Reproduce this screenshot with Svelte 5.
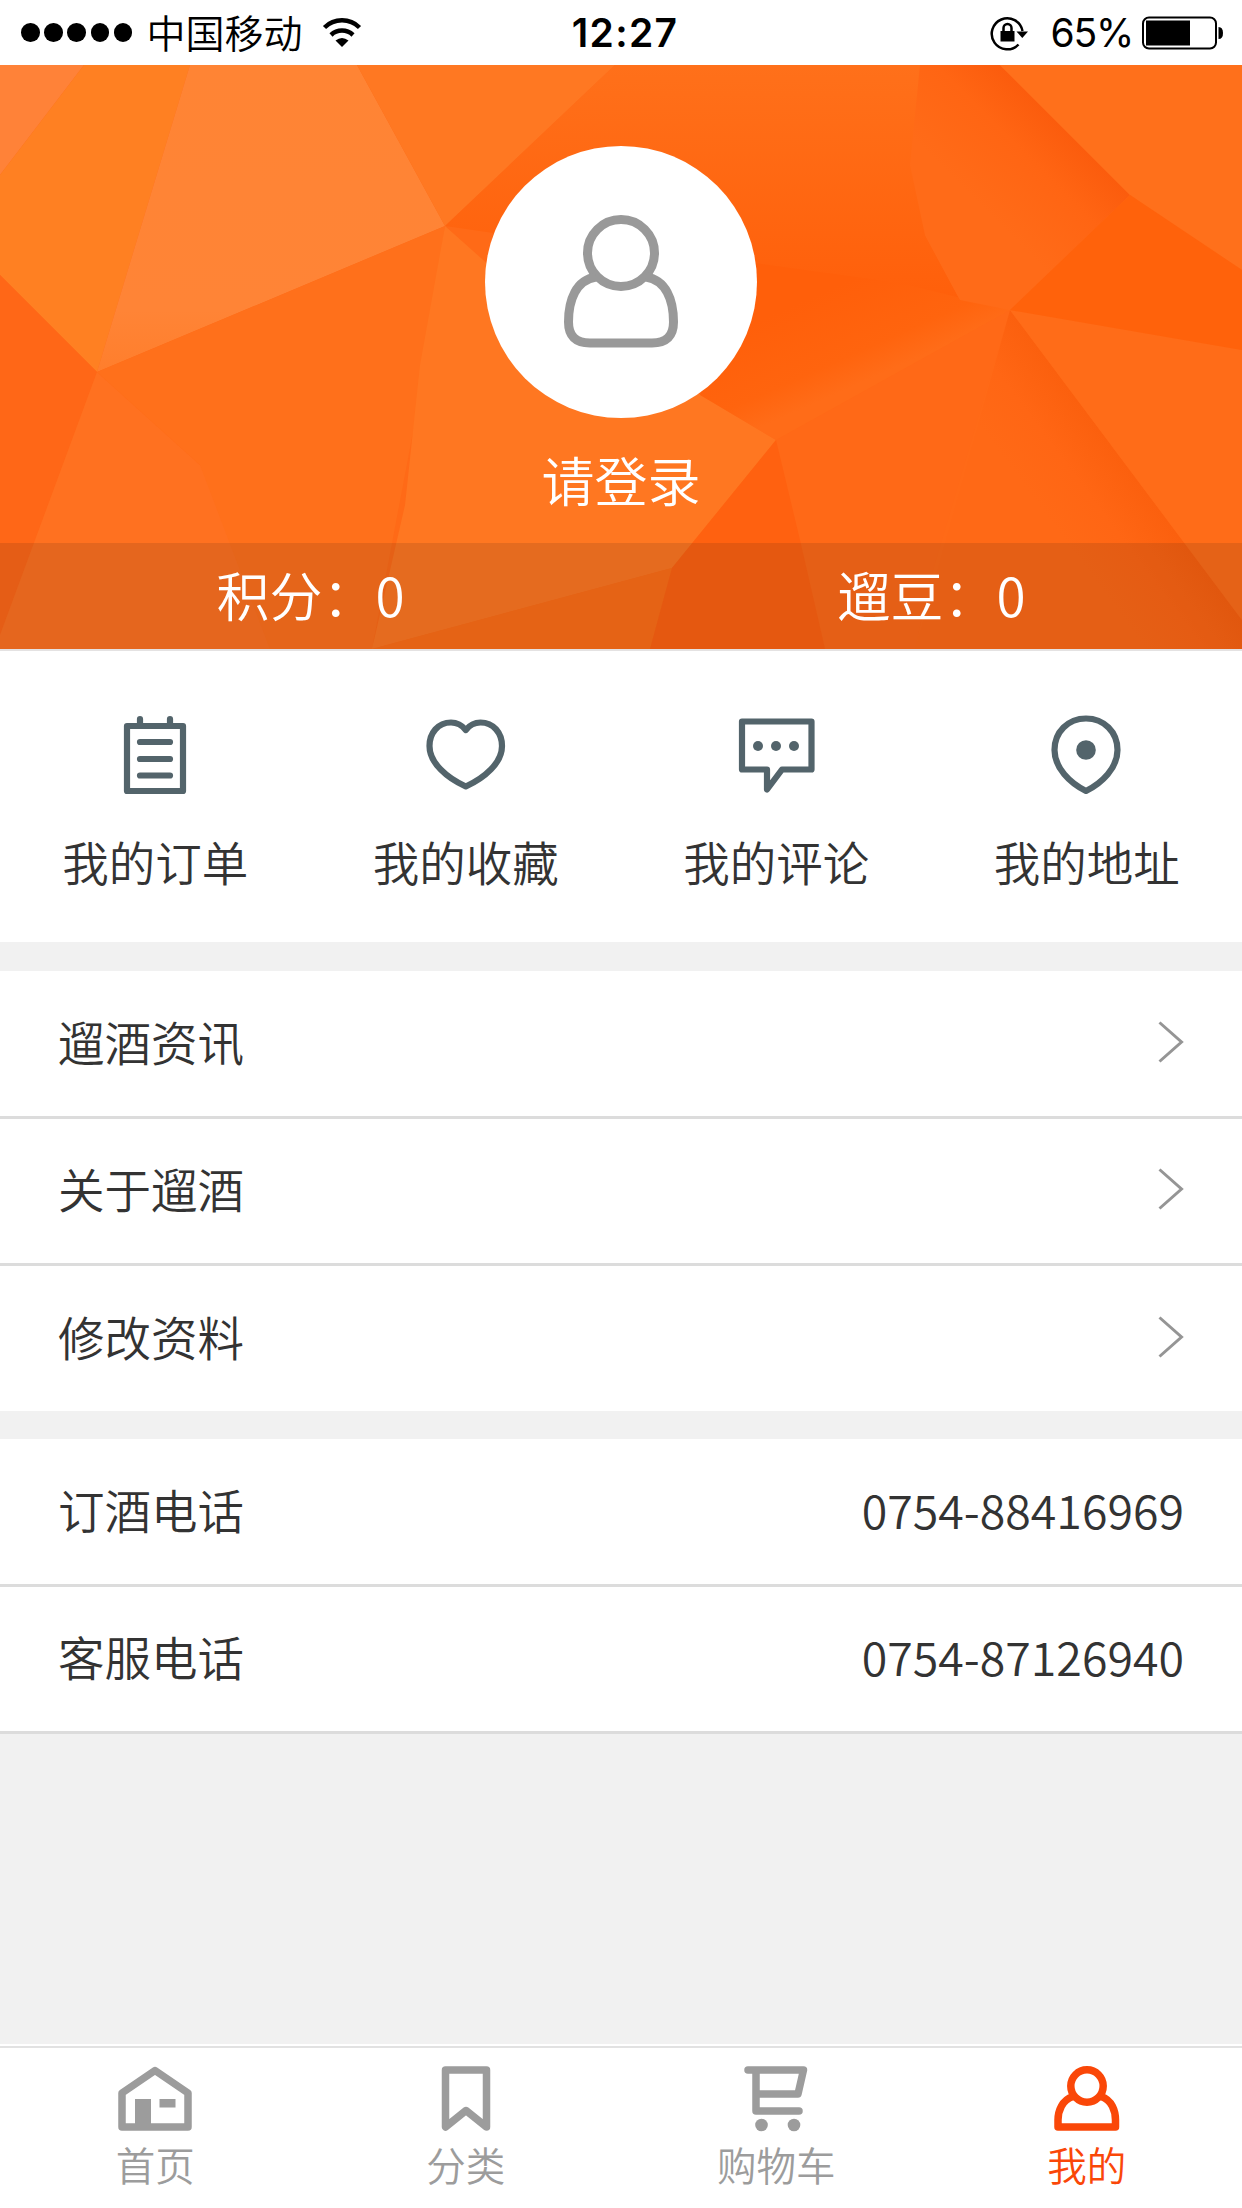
<script lang="ts">
  type Shortcut = { id: string; label: string };
  type Facet = { points: string; fill: string };

  const shortcuts: Shortcut[] = [
    { id: "orders", label: "我的订单" },
    { id: "favorites", label: "我的收藏" },
    { id: "comments", label: "我的评论" },
    { id: "address", label: "我的地址" },
  ];

  const links = ["遛酒资讯", "关于遛酒", "修改资料"];

  const phones = [
    { label: "订酒电话", number: "0754-88416969" },
    { label: "客服电话", number: "0754-87126940" },
  ];

  const tabs: Shortcut[] = [
    { id: "home", label: "首页" },
    { id: "category", label: "分类" },
    { id: "cart", label: "购物车" },
    { id: "mine", label: "我的" },
  ];

  // Low-poly banner background
  const facets: Facet[] = [
    { points: "0,0 84,0 0,110", fill: "#ff8238" },
    { points: "84,0 190,0 97,307 0,210 0,110", fill: "#ff8022" },
    { points: "190,0 357,0 445,161 97,307", fill: "url(#facet-light)" },
    { points: "357,0 615,0 445,161", fill: "#ff7822" },
    { points: "615,0 1010,0 925,170 960,235 900,240 757,206 445,161", fill: "url(#facet-center)" },
    { points: "0,210 97,307 0,570", fill: "#ff6717" },
    { points: "97,307 0,570 0,584 380,584 200,400", fill: "#ff7120" },
    { points: "97,307 445,161 420,330 372,584 270,584 200,400", fill: "#ff701b" },
    { points: "445,161 500,210 776,375 672,503 372,584 405,440 420,300", fill: "#ff7721" },
    { points: "672,503 650,584 372,584", fill: "#ff6e16" },
    { points: "740,196 900,218 1010,245 776,375 700,330", fill: "url(#facet-fold)" },
    { points: "776,375 1010,245 930,515 915,584 825,584", fill: "#ff6917" },
    { points: "776,375 800,475 825,584 650,584 672,503", fill: "#ff6110" },
    { points: "1010,245 1242,555 1242,584 915,584", fill: "url(#facet-lower)" },
    { points: "1010,245 1242,285 1242,555", fill: "#ff6c18" },
    { points: "1000,0 1130,130 1010,245 960,235 925,170 910,100 920,0", fill: "url(#facet-edge)" },
    { points: "1000,0 1242,0 1242,205 1130,130", fill: "#ff701b" },
    { points: "1130,130 1242,205 1242,285 1010,245", fill: "#ff620b" },
  ];
</script>

<div class="screen">
  <header class="status">
    <div class="carrier">
      <div class="signal">
        {#each Array(5) as _}
          <span class="dot"></span>
        {/each}
      </div>
      <span class="operator">中国移动</span>
      <svg class="wifi" viewBox="0 0 40 30">
        <path d="M2.5 9.5a25 25 0 0 1 35 0" />
        <path d="M9 17a16 16 0 0 1 22 0" />
        <path class="solid" d="M13.5 22.5q6.5-5 13 0L20 29z" />
      </svg>
    </div>
    <span class="time">12:27</span>
    <div class="power">
      <svg class="lock" viewBox="0 0 38 36">
        <path d="M28.500 29.500A15.500 15.500 0 1 1 32.500 16" />
        <path class="solid" d="M26.500 16.500h11.500l-5.700 6.500z" />
        <path class="solid" d="M10.500 16h14v10.500h-14z" />
        <path d="M13.500 17v-4a4 4 0 0 1 8 0v4" />
      </svg>
      <span class="percent">65%</span>
      <svg class="battery" viewBox="0 0 82 34">
        <rect x="2" y="1.500" width="73" height="31" rx="6" />
        <path class="solid" d="M5 4.500h44v25h-44z" />
        <path class="solid" d="M77.500 11q4.500 0 4.500 6t-4.500 6z" />
      </svg>
    </div>
  </header>

  <section class="hero">
    <svg class="facets" viewBox="0 0 1242 584" preserveAspectRatio="none">
      <defs>
        <linearGradient id="facet-light" x1="0" y1="0" x2="0" y2="1">
          <stop offset="0" stop-color="#ff8434" />
          <stop offset="0.8" stop-color="#ff8436" />
          <stop offset="1" stop-color="#ff7e2c" />
        </linearGradient>
        <linearGradient id="facet-center" x1="0" y1="0" x2="0" y2="1">
          <stop offset="0" stop-color="#ff701a" />
          <stop offset="1" stop-color="#ff5f0a" />
        </linearGradient>
        <linearGradient id="facet-fold" gradientUnits="userSpaceOnUse" x1="850" y1="215" x2="890" y2="305">
          <stop offset="0" stop-color="#ff5f0a" />
          <stop offset="0.7" stop-color="#ff640e" />
          <stop offset="1" stop-color="#ff6c18" />
        </linearGradient>
        <linearGradient id="facet-edge" gradientUnits="userSpaceOnUse" x1="1065" y1="65" x2="985" y2="145">
          <stop offset="0" stop-color="#fb5c0d" />
          <stop offset="0.4" stop-color="#ff6513" />
          <stop offset="1" stop-color="#ff6b18" />
        </linearGradient>
        <linearGradient id="facet-lower" gradientUnits="userSpaceOnUse" x1="1125" y1="400" x2="1050" y2="456">
          <stop offset="0" stop-color="#fb600e" />
          <stop offset="0.5" stop-color="#ff6614" />
          <stop offset="1" stop-color="#ff6916" />
        </linearGradient>
      </defs>
      {#each facets as facet}
        <polygon points={facet.points} fill={facet.fill} />
      {/each}
    </svg>

    <div class="profile">
      <div class="avatar">
        <svg viewBox="0 0 120 140">
          <circle cx="60" cy="41" r="33.500" />
          <path d="M35 65C15 68 7.500 88 7.500 110Q7.500 131 29 131H91Q112.500 131 112.500 110C112.500 88 105 68 85 65" />
        </svg>
      </div>
      <span class="login">请登录</span>
    </div>

    <div class="stats">
      <span>积分：0</span>
      <span>遛豆：0</span>
    </div>
  </section>

  <nav class="shortcuts">
    {#each shortcuts as item}
      <a class="shortcut" href="#{item.id}">
        <svg viewBox="0 0 80 80">
          {#if item.id === "orders"}
            <path d="M12 11h56v65h-56zM25 4v7M55 4v7M25 27h30M25 44h30M25 60.500h30" />
          {:else if item.id === "favorites"}
            <path d="M39.800 15C35 9 30 7.500 25 7.500C12 7.500 3.500 18 3.500 31C3.500 48 21 63 39.800 71.500C58.500 63 76 48 76 31C76 18 67.500 7.500 54.500 7.500C49.500 7.500 44.500 9 39.800 15Z" />
          {:else if item.id === "comments"}
            <path d="M6 6.500h69.500v48h-29.500l-15 20v-20h-25z" />
            <circle class="solid" cx="22" cy="31" r="5" />
            <circle class="solid" cx="40" cy="31" r="5" />
            <circle class="solid" cx="58" cy="31" r="5" />
          {:else}
            <path d="M39 3.500C21 3.500 7.500 17 7.500 35C7.500 53 23 68 39 76C55 68 70.500 53 70.500 35C70.500 17 57 3.500 39 3.500Z" />
            <circle class="solid" cx="39" cy="35" r="9.800" />
          {/if}
        </svg>
        <span>{item.label}</span>
      </a>
    {/each}
  </nav>

  <section class="list">
    {#each links as link}
      <div class="row">
        <span>{link}</span>
        <svg class="chevron" viewBox="0 0 26 42">
          <path d="M1.500 1.500L23.500 21L1.500 40.500" />
        </svg>
      </div>
    {/each}
  </section>

  <section class="list contact">
    {#each phones as phone}
      <div class="row">
        <span>{phone.label}</span>
        <span class="number">{phone.number}</span>
      </div>
    {/each}
  </section>

  <nav class="tabs">
    {#each tabs as tab}
      <a class="tab" class:active={tab.id === "mine"} href="#{tab.id}">
        <svg viewBox="0 0 80 72">
          {#if tab.id === "home"}
            <path d="M7 31L40 8.500L73 31V65H7Z" />
            <path class="solid" d="M20 37h16v28h-16zM44.500 37h16v8.500h-16z" />
          {:else if tab.id === "category"}
            <path d="M19.500 8h41v57L40 48.500L19.500 65z" />
          {:else if tab.id === "cart"}
            <path d="M12 8H67.500L62 32H20M20 8V49H63" />
            <circle class="solid" cx="25.500" cy="63" r="6.300" />
            <circle class="solid" cx="58" cy="63" r="6.300" />
          {:else}
            <circle cx="40" cy="24" r="16.200" />
            <path d="M26 34.500C15 38 11 49 11 58V65H68.500V58C68.500 49 65 38 54 34.500" />
          {/if}
        </svg>
        <span>{tab.label}</span>
      </a>
    {/each}
  </nav>
</div>

<style>
  :global(body) {
    margin: 0;
    background: #f1f1f1;
  }

  .screen {
    display: flex;
    flex-direction: column;
    width: 1242px;
    height: 2208px;
    background: #f1f1f1;
    color: #333;
    font-family: "Noto Sans CJK SC", sans-serif;
    font-size: 46.5px;
    font-weight: 350;
    line-height: 1;
  }

  svg {
    display: block;
    fill: none;
    stroke: currentColor;
  }

  .solid {
    fill: currentColor;
    stroke: none;
  }

  a {
    color: inherit;
    text-decoration: none;
  }

  .status {
    display: grid;
    grid-template-columns: 1fr auto 1fr;
    align-items: center;
    height: 65px;
    padding: 0 19px 0 21px;
    box-sizing: border-box;
    background: #fff;
    color: #000;
    font-family: Inter, "Noto Sans CJK SC", sans-serif;
    font-weight: 400;
    font-size: 39px;
  }

  .carrier,
  .power,
  .signal {
    display: flex;
    align-items: center;
  }

  .signal {
    gap: 4.5px;
  }

  .dot {
    width: 18.7px;
    height: 18.7px;
    border-radius: 50%;
    background: #000;
  }

  .operator {
    margin-left: 14px;
    padding-top: 1px;
    font-weight: 350;
  }

  .wifi {
    width: 40px;
    height: 30px;
    margin-left: 20px;
    stroke-width: 4.5;
  }

  .time {
    padding-left: 6px;
    font-weight: 600;
    letter-spacing: 1.3px;
  }

  .power {
    justify-content: flex-end;
  }

  .lock {
    width: 38px;
    height: 36px;
    stroke-width: 2.5;
  }

  .percent {
    margin-left: 22px;
    letter-spacing: -1.2px;
  }

  .battery {
    width: 82px;
    height: 34px;
    margin-left: 8px;
    stroke-width: 2;
  }

  .hero {
    position: relative;
    display: flex;
    flex-direction: column;
    justify-content: space-between;
    height: 584px;
    background: #ff6a17;
    color: #fff;
    font-size: 53px;
  }

  .facets {
    position: absolute;
    inset: 0;
    width: 100%;
    height: 100%;
    stroke: none;
  }

  .profile {
    position: relative;
    display: flex;
    flex-direction: column;
    align-items: center;
    gap: 35px;
    padding-top: 81px;
  }

  .avatar {
    display: flex;
    justify-content: center;
    align-items: center;
    width: 272px;
    height: 272px;
    border-radius: 50%;
    background: #fff;
    color: #999;
  }

  .avatar svg {
    width: 120px;
    height: 140px;
    stroke-width: 9;
  }

  .stats {
    position: relative;
    display: grid;
    grid-template-columns: 1fr 1fr;
    align-items: center;
    height: 106px;
    padding-bottom: 3px;
    box-sizing: border-box;
    background: rgba(20, 20, 20, 0.11);
    text-align: center;
  }

  .shortcuts {
    display: grid;
    grid-template-columns: repeat(4, 1fr);
    height: 293px;
    border-top: 2px solid #e4e2e2;
    box-sizing: border-box;
    background: #fff;
  }

  .shortcut {
    display: flex;
    flex-direction: column;
    align-items: center;
    gap: 43px;
    padding-top: 64px;
  }

  .shortcut svg {
    width: 80px;
    height: 80px;
    color: #53646b;
    stroke-width: 6.2;
    stroke-linecap: round;
    stroke-linejoin: round;
  }

  .list {
    margin-top: 29px;
  }

  .contact {
    margin-top: 28px;
  }

  .row {
    display: flex;
    justify-content: space-between;
    align-items: center;
    height: 147.5px;
    padding: 0 58px 3px;
    border-bottom: 3px solid #dcdcdc;
    box-sizing: border-box;
    background: #fff;
  }

  .row span {
    padding-bottom: 2px;
  }

  .list:not(.contact) .row:last-child {
    height: 145px;
    border-bottom: none;
  }

  .chevron {
    width: 26px;
    height: 42px;
    color: #959595;
    stroke-width: 3;
  }

  .tabs {
    display: grid;
    grid-template-columns: repeat(4, 1fr);
    height: 162px;
    margin-top: auto;
    border-top: 2px solid #e2e2e2;
    box-shadow: 0 -2px #fff;
    box-sizing: border-box;
    background: #fff;
    color: #9c9c9c;
    font-size: 39.5px;
  }

  .tab {
    display: flex;
    flex-direction: column;
    align-items: center;
    gap: 10px;
    padding-top: 14px;
  }

  .tab svg {
    width: 80px;
    height: 72px;
    stroke-width: 7.5;
    stroke-linecap: round;
    stroke-linejoin: round;
  }

  .active {
    color: #fa4708;
  }
</style>
